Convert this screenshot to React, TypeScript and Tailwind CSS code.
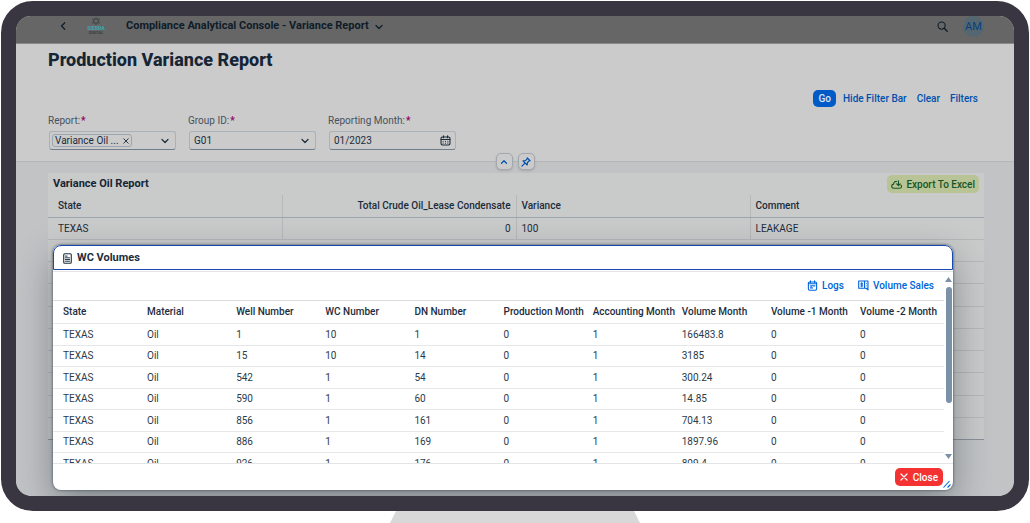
import type { ReactNode } from "react";

const WC_COLUMNS = [
  "State",
  "Material",
  "Well Number",
  "WC Number",
  "DN Number",
  "Production Month",
  "Accounting Month",
  "Volume Month",
  "Volume -1 Month",
  "Volume -2 Month",
];

const WC_ROWS = [
  ["TEXAS", "Oil", "1", "10", "1", "0", "1", "166483.8", "0", "0"],
  ["TEXAS", "Oil", "15", "10", "14", "0", "1", "3185", "0", "0"],
  ["TEXAS", "Oil", "542", "1", "54", "0", "1", "300.24", "0", "0"],
  ["TEXAS", "Oil", "590", "1", "60", "0", "1", "14.85", "0", "0"],
  ["TEXAS", "Oil", "856", "1", "161", "0", "1", "704.13", "0", "0"],
  ["TEXAS", "Oil", "886", "1", "169", "0", "1", "1897.96", "0", "0"],
  ["TEXAS", "Oil", "926", "1", "176", "0", "1", "809.4", "0", "0"],
];

const EMPTY_ROWS = 9;

type IconProps = { className?: string; children: ReactNode };

function Icon({ className, children }: IconProps) {
  return (
    <svg
      viewBox="0 0 16 16"
      fill="none"
      stroke="currentColor"
      strokeWidth="1.6"
      strokeLinecap="round"
      strokeLinejoin="round"
      aria-hidden="true"
      className={`shrink-0 ${className ?? ""}`}
    >
      {children}
    </svg>
  );
}

function ChevronDown({ className }: { className?: string }) {
  return (
    <Icon className={className}>
      <path d="M2 5l6 6 6-6" strokeWidth="2.4" />
    </Icon>
  );
}

function Logo() {
  return (
    <svg viewBox="0 0 20 18" className="h-[18px] w-5" role="img" aria-label="Sierra Digital">
      <g fill="none" stroke="#454b4e" strokeWidth="1.3">
        <circle cx="10" cy="4" r="2.4" />
        <path d="M10 0v1.4M10 6.6V8M6.2 1.8l1.4.9M12.4 5.3l1.4.9M6.2 6.2l1.4-.9M12.4 2.7l1.4-.9" />
      </g>
      <text
        x="10"
        y="13"
        textAnchor="middle"
        fontSize="5"
        fontWeight="900"
        fill="#3fa3a8"
        fontFamily="Roboto, sans-serif"
      >
        SIERRA
      </text>
      <text
        x="10"
        y="17.4"
        textAnchor="middle"
        fontSize="4"
        fontWeight="500"
        fill="#303436"
        fontFamily="Roboto, sans-serif"
      >
        DIGITAL
      </text>
    </svg>
  );
}

function ShellBar() {
  return (
    <header className="flex h-7 items-start border-b border-[#8a8a8a] bg-[#666666] pr-[30px] pl-[41px] text-[#0f1c28]">
      <button type="button" aria-label="Back" className="mt-1 p-0.5">
        <Icon className="size-2">
          <path d="M11.5 1.5L5 8l6.5 6.5" strokeWidth="2.4" />
        </Icon>
      </button>
      <div className="mt-px ml-[17px]">
        <Logo />
      </div>
      <button
        type="button"
        className="ml-5 flex h-[21px] items-center gap-1.5 text-[11px] font-bold whitespace-nowrap"
      >
        Compliance Analytical Console - Variance Report
        <ChevronDown className="size-2" />
      </button>
      <div className="ml-auto flex items-center gap-[15px]">
        <button type="button" aria-label="Search">
          <Icon className="size-[11px]">
            <circle cx="6.7" cy="6.7" r="5.2" />
            <path d="M10.6 10.6l4.2 4.2" strokeWidth="2" />
          </Icon>
        </button>
        <button
          type="button"
          aria-label="Profile"
          className="flex size-[21px] items-center justify-center rounded-full bg-[#54666f] pt-0.5 text-[11px] text-[#083f80]"
        >
          AM
        </button>
      </div>
    </header>
  );
}

function FieldLabel({ htmlFor, children }: { htmlFor: string; children: ReactNode }) {
  return (
    <label htmlFor={htmlFor} className="block text-[10px] leading-[14px] text-[#46525e]">
      {children}
      <span className="ml-px font-bold text-[#95005c]">*</span>
    </label>
  );
}

const fieldBox =
  "ml-px flex h-[19px] items-center rounded-[3px] border border-[#aab1b9] border-b-[#6f7d8c] px-1";

function FilterBar() {
  return (
    <section className="relative border-b border-[#b4b6b9] bg-[#cbcbcb] px-8 pt-[5px] pb-[11px]">
      <h1 className="text-lg leading-[22px] font-extrabold text-[#152535]">
        Production Variance Report
      </h1>
      <div className="mt-[19px] flex items-center justify-end text-[10px] font-medium text-[#0050ad]">
        <button
          type="button"
          className="h-[17px] rounded-[5px] bg-[#005ac8] px-[5px] text-[#dbe6f2]"
        >
          Go
        </button>
        <button type="button" className="ml-[7px]">
          Hide Filter Bar
        </button>
        <button type="button" className="ml-2.5">
          Clear
        </button>
        <button type="button" className="mr-1 ml-2.5">
          Filters
        </button>
      </div>
      <div className="mt-[7px] flex gap-3 text-[10px] text-[#1c2c3b]">
        <div className="w-32">
          <FieldLabel htmlFor="report">Report:</FieldLabel>
          <div className={`${fieldBox} mt-[3px] justify-between pl-0.5`}>
            <span className="flex h-[13px] items-center gap-1 rounded-[3px] border border-[#9aa5b1] px-0.5 whitespace-nowrap">
              Variance Oil ...
              <button type="button" aria-label="Remove Variance Oil">
                <Icon className="size-1.5">
                  <path d="M2 2l12 12M14 2L2 14" strokeWidth="2.4" />
                </Icon>
              </button>
            </span>
            <button id="report" type="button" aria-label="Open report list" className="mr-0.5">
              <ChevronDown className="size-2" />
            </button>
          </div>
        </div>
        <div className="w-32">
          <FieldLabel htmlFor="group">Group ID:</FieldLabel>
          <div className={`${fieldBox} mt-[3px]`}>
            <select id="group" defaultValue="G01" className="min-w-0 flex-1 appearance-none">
              <option>G01</option>
            </select>
            <ChevronDown className="mr-0.5 size-2" />
          </div>
        </div>
        <div className="w-32">
          <FieldLabel htmlFor="month">Reporting Month:</FieldLabel>
          <div className={`${fieldBox} mt-[3px]`}>
            <input id="month" defaultValue="01/2023" className="min-w-0 flex-1 outline-none" />
            <Icon className="size-[11px]">
              <rect x="1.5" y="2.8" width="13" height="11.7" rx="2" />
              <path d="M1.5 6.5h13M5 1v3M11 1v3" />
              <path d="M4.5 9h.1M8 9h.1M11.4 9h.1M4.5 11.8h.1M8 11.8h.1M11.4 11.8h.1" />
            </Icon>
          </div>
        </div>
      </div>
      <div className="absolute inset-x-0 -bottom-[9px] flex justify-center gap-[5px] text-[#0050ad]">
        <button
          type="button"
          aria-label="Collapse header"
          className="flex size-[17px] items-center justify-center rounded-[5px] border border-[#a3a8ae] bg-[#cbcbcb] shadow-sm"
        >
          <Icon className="size-2">
            <path d="M3 10.5l5-5 5 5" strokeWidth="2.4" />
          </Icon>
        </button>
        <button
          type="button"
          aria-label="Pin header"
          className="flex size-[17px] items-center justify-center rounded-[5px] border border-[#a3a8ae] bg-[#cbcbcb] shadow-sm"
        >
          <Icon className="size-2.5">
            <path
              d="M10 1.5l4.5 4.5-1.8.4-2.5 2.6-.3 3.8-6.7-6.7 3.8-.3 2.6-2.5zM6.3 9.7L1.5 14.5"
              strokeWidth="1.9"
            />
          </Icon>
        </button>
      </div>
    </section>
  );
}

function VarianceTable() {
  const cell = "border-b border-[#b5b7b9] px-[5px] text-left";
  const divided = `${cell} border-r border-r-[#b5b7b9]`;
  return (
    <section className="mr-[30px] ml-8 bg-[#c9caca]">
      <div className="flex h-[22px] items-center justify-between px-[5px]">
        <h2 className="text-[11px] font-bold text-[#152535]">Variance Oil Report</h2>
        <button
          type="button"
          className="flex h-[18px] items-center gap-1 rounded-[5px] bg-[#b8c495] px-1 text-[10px] font-medium text-[#175426]"
        >
          <Icon className="size-[11px]">
            <path d="M9 13.5h3.7a2.6 2.6 0 0 0 1.8-4.5M9 13.5H4.2a3 3 0 0 1-.4-6 4 4 0 0 1 4-4M10.8 2.5v7M8.3 7.2l2.5 2.5 2.5-2.5" />
          </Icon>
          Export To Excel
        </button>
      </div>
      <table className="w-full table-fixed border-collapse text-[10px] text-[#1c2c3b]">
        <thead>
          <tr className="h-[22px] [&>th]:border-b-[#9da5ad] [&>th]:font-medium">
            <th className={`${divided} pl-2.5`}>State</th>
            <th className={`${divided} text-right whitespace-nowrap`}>
              Total Crude Oil_Lease Condensate
            </th>
            <th className={divided}>Variance</th>
            <th className={cell}>Comment</th>
          </tr>
        </thead>
        <tbody>
          <tr className="h-[22px]">
            <td className={`${divided} pl-2.5`}>TEXAS</td>
            <td className={`${divided} text-right`}>0</td>
            <td className={divided}>100</td>
            <td className={cell}>LEAKAGE</td>
          </tr>
          {Array.from({ length: EMPTY_ROWS }, (_, i) => (
            <tr key={i} className="h-[22px] nth-[4n]:h-[23px] last:[&>td]:border-b-[#8a9097]">
              <td className={cell} />
              <td className={cell} />
              <td className={cell} />
              <td className={cell} />
            </tr>
          ))}
        </tbody>
      </table>
    </section>
  );
}

function WcDialog() {
  return (
    <div
      role="dialog"
      aria-labelledby="wc-title"
      className="absolute top-[229px] right-[61px] left-[37px] rounded-lg bg-white text-[10px] text-[#1d2d3e] shadow-[0_0_2px_1px_rgba(60,75,90,0.5),0_14px_36px_rgba(30,40,50,0.4)]"
    >
      <div className="flex h-[25px] items-center gap-1 rounded-t-lg border border-[#1a48b0] px-2 pt-0.5">
        <Icon className="size-[11px]">
          <rect x="2.5" y="1" width="11" height="14" rx="1.5" />
          <path d="M5 4.5h2.5M5 7h6M5 9.5h6M5 12h6" strokeWidth="1.4" />
        </Icon>
        <h2 id="wc-title" className="text-[11px] font-bold">
          WC Volumes
        </h2>
      </div>
      <div className="mt-px flex h-[193px] border-y border-[#e2e4e6]">
        <div className="min-w-0 flex-1 overflow-hidden">
          <div className="flex h-[29px] items-center justify-end gap-3.5 border-b border-[#d9dbdd] pr-2.5 pb-0.5 font-medium text-[#0064d9]">
            <button type="button" className="flex items-center gap-1">
              <Icon className="size-[11px]">
                <rect x="2" y="2.8" width="12" height="12" rx="2" />
                <path d="M2 5.5h12M5 1v2.5M11 1v2.5M9 8.5h2.5M5 11.5h3M5 8.5l1 .8L7.5 8" />
              </Icon>
              Logs
            </button>
            <button type="button" className="flex items-center gap-1">
              <Icon className="size-[11px]">
                <path d="M1 1.5h13.5v13l-2.5-2.5H1zM9.5 1.5V12" />
                <path d="M6.8 4.8H4.2v2h2.5v2.2H4M5.4 3.8v6.2M12 5h.4M12 8.5h.4" strokeWidth="1.2" />
              </Icon>
              Volume Sales
            </button>
          </div>
          <table className="w-full table-fixed border-collapse">
            <thead>
              <tr className="h-[22px] border-b border-[#e5e7e9]">
                {WC_COLUMNS.map((name) => (
                  <th
                    key={name}
                    className="pl-2.5 text-left font-medium whitespace-nowrap first:w-[84px] last:w-[94px]"
                  >
                    {name}
                  </th>
                ))}
              </tr>
            </thead>
            <tbody>
              {WC_ROWS.map((row) => (
                <tr
                  key={row[2]}
                  className="h-[22px] border-b border-[#e5e7e9] text-[#2c3b4b] even:h-[21px]"
                >
                  {row.map((value, i) => (
                    <td key={WC_COLUMNS[i]} className="pl-2.5">
                      {value}
                    </td>
                  ))}
                </tr>
              ))}
            </tbody>
          </table>
        </div>
        <div className="flex w-[9px] flex-col items-center py-1 text-[#7b91a8]">
          <svg viewBox="0 0 7 5" className="mt-px h-[5px] w-[7px]" fill="currentColor">
            <path d="M3.5 0L7 5H0z" />
          </svg>
          <div className="mt-[5px] h-[116px] w-1.5 rounded-full bg-[#7b91a8]" />
          <svg viewBox="0 0 7 5" className="mt-auto h-[5px] w-[7px]" fill="currentColor">
            <path d="M0 0h7L3.5 5z" />
          </svg>
        </div>
      </div>
      <div className="relative flex h-[26px] items-center justify-end pr-2.5">
        <button
          type="button"
          className="flex h-[18px] items-center gap-[5px] rounded-[5px] bg-[#f53232] px-[5px] font-medium text-white"
        >
          <Icon className="size-2">
            <path d="M2 2l12 12M14 2L2 14" strokeWidth="2.4" />
          </Icon>
          Close
        </button>
        <svg
          viewBox="0 0 8 8"
          className="absolute right-0.5 bottom-0.5 size-2 text-[#0064d9]"
          fill="none"
          stroke="currentColor"
          aria-hidden="true"
        >
          <path d="M0.5 7.5L6.5 1M4.5 7.5L7.5 4.5" strokeWidth="1.1" />
        </svg>
      </div>
    </div>
  );
}

export default function App() {
  return (
    <div className="overflow-hidden bg-white p-px font-['Roboto',sans-serif]">
      <div className="rounded-[32px] border-[15px] border-[#3a3641]">
        <main className="relative overflow-hidden rounded-[15px] bg-[#c1c3c5] pb-14">
          <ShellBar />
          <FilterBar />
          <div className="pt-[11px]">
            <VarianceTable />
          </div>
          <WcDialog />
        </main>
      </div>
      <svg viewBox="0 0 250 12" className="mx-auto block h-3 w-[250px]" aria-hidden="true">
        <path d="M6 0h238l6 12H0z" fill="#d8d8d8" />
      </svg>
    </div>
  );
}
